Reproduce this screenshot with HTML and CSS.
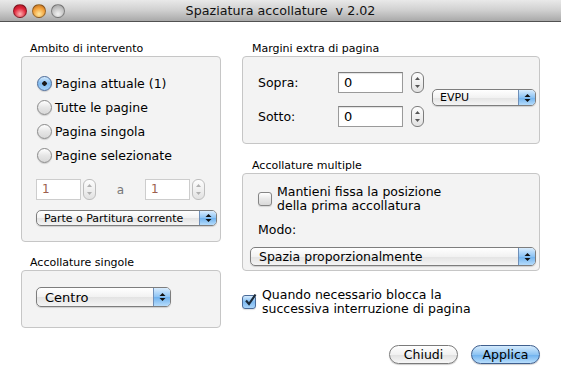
FILE: index.html
```html
<!DOCTYPE html>
<html lang="it">
  <head>
    <meta charset="UTF-8" />
    <title>Spaziatura accollature</title>
    <link rel="stylesheet" href="styles.css">
  </head>

  <body>
    <div class="window">
      <div class="titlebar">
        <div class="lights">
          <span class="light red"></span>
          <span class="light yellow"></span>
          <span class="light off"></span>
        </div>
        <div class="title">Spaziatura accollature&nbsp; v 2.02</div>
        <div></div>
      </div>

      <div class="content">
        <div class="col left">
          <div class="group-label">Ambito di intervento</div>
          <div class="group scope">
            <div class="radio-row"><span class="radio on"></span>Pagina attuale (1)</div>
            <div class="radio-row"><span class="radio"></span>Tutte le pagine</div>
            <div class="radio-row"><span class="radio"></span>Pagina singola</div>
            <div class="radio-row"><span class="radio"></span>Pagine selezionate</div>

            <div class="range">
              <span class="field small disabled">1</span>
              <span class="stepper disabled">
                <svg width="7" height="15" viewBox="0 0 7 15"><polygon points="1,5 3.5,2 6,5" /><polygon points="1,10 6,10 3.5,13" /></svg>
              </span>
              <span class="to">a</span>
              <span class="field small disabled">1</span>
              <span class="stepper disabled">
                <svg width="7" height="15" viewBox="0 0 7 15"><polygon points="1,5 3.5,2 6,5" /><polygon points="1,10 6,10 3.5,13" /></svg>
              </span>
            </div>

            <div class="popup small part">
              <span class="popup-text">Parte o Partitura corrente</span>
              <span class="popup-arrows">
                <svg width="7" height="10" viewBox="0 0 7 10"><polygon points="0.5,4 3.5,1 6.5,4" /><polygon points="0.5,6 6.5,6 3.5,9" /></svg>
              </span>
            </div>
          </div>

          <div class="group-label second">Accollature singole</div>
          <div class="group single">
            <div class="popup centro">
              <span class="popup-text">Centro</span>
              <span class="popup-arrows">
                <svg width="7" height="10" viewBox="0 0 7 10"><polygon points="0.5,4 3.5,1 6.5,4" /><polygon points="0.5,6 6.5,6 3.5,9" /></svg>
              </span>
            </div>
          </div>
        </div>

        <div class="col right">
          <div class="group-label">Margini extra di pagina</div>
          <div class="group margins">
            <div class="margin-grid">
              <span class="margin-label">Sopra:</span>
              <span class="field">0</span>
              <span class="stepper">
                <svg width="7" height="15" viewBox="0 0 7 15"><polygon points="1,5 3.5,2 6,5" /><polygon points="1,10 6,10 3.5,13" /></svg>
              </span>
              <span class="margin-label">Sotto:</span>
              <span class="field">0</span>
              <span class="stepper">
                <svg width="7" height="15" viewBox="0 0 7 15"><polygon points="1,5 3.5,2 6,5" /><polygon points="1,10 6,10 3.5,13" /></svg>
              </span>
            </div>
            <div class="popup small units">
              <span class="popup-text">EVPU</span>
              <span class="popup-arrows">
                <svg width="7" height="10" viewBox="0 0 7 10"><polygon points="0.5,4 3.5,1 6.5,4" /><polygon points="0.5,6 6.5,6 3.5,9" /></svg>
              </span>
            </div>
          </div>

          <div class="group-label second">Accollature multiple</div>
          <div class="group multiple">
            <div class="check-row">
              <span class="checkbox"></span>
              <span>Mantieni fissa la posizione<br>della prima accollatura</span>
            </div>
            <div class="mode-label">Modo:</div>
            <div class="popup mode">
              <span class="popup-text">Spazia proporzionalmente</span>
              <span class="popup-arrows">
                <svg width="7" height="10" viewBox="0 0 7 10"><polygon points="0.5,4 3.5,1 6.5,4" /><polygon points="0.5,6 6.5,6 3.5,9" /></svg>
              </span>
            </div>
          </div>

          <div class="check-row page-break">
            <span class="checkbox on">
              <svg width="14" height="14" viewBox="0 0 14 14"><path d="M3 7.5 L6 11 L12.5 1.5" fill="none" stroke="#1b2a3a" stroke-width="2.2" /></svg>
            </span>
            <span>Quando necessario blocca la<br>successiva interruzione di pagina</span>
          </div>

          <div class="buttons">
            <button class="btn">Chiudi</button>
            <button class="btn default">Applica</button>
          </div>
        </div>
      </div>
    </div>
  </body>
</html>
```

FILE: styles.css
```css
* {
  margin: 0;
  padding: 0;
  box-sizing: border-box;
}

body {
  background-color: #fff;
  font-family: "DejaVu Sans", "Lucida Grande", sans-serif;
  font-size: 12px;
  color: #000;
}

.window {
  width: 561px;
  height: 386px;
  background-color: #fff;
  overflow: hidden;
}

/* barra del titolo */
.titlebar {
  height: 22px;
  display: grid;
  grid-template-columns: 1fr auto 1fr;
  align-items: center;
  background: linear-gradient(#e9e9e9, #cfcfcf 50%, #a9a9a9);
  border-bottom: 1px solid #515151;
}

.lights {
  display: flex;
  gap: 5px;
  padding-left: 13px;
}

.light {
  width: 14px;
  height: 14px;
  border-radius: 50%;
  border: 1px solid rgba(0, 0, 0, 0.35);
}

.light.red {
  background: radial-gradient(circle at 50% 75%, #ffb3b3, #e0263a 55%, #9c0f1c);
}

.light.yellow {
  background: radial-gradient(circle at 50% 75%, #ffe8a0, #f3a13a 55%, #b0631a);
}

.light.off {
  background: radial-gradient(circle at 50% 75%, #f2f2f2, #c4c4c4 55%, #9a9a9a);
}

.title {
  font-size: 12.7px;
  color: #111;
  white-space: nowrap;
}

/* contenuto */
.content {
  display: flex;
  gap: 21px;
  padding: 20px 0 0 21px;
}

.col {
  display: flex;
  flex-direction: column;
}

.col.left {
  width: 200px;
}

.col.right {
  width: 298px;
}

.group-label {
  font-size: 11px;
  line-height: 14px;
  padding-left: 9px;
}

.col.right .group-label {
  padding-left: 10px;
}

.group-label.second {
  margin-top: 14px;
}

.col.right .group-label.second {
  margin-top: 15px;
}

.group {
  background-color: #f3f3f3;
  border: 1px solid #c6c6c6;
  border-radius: 4px;
}

.scope {
  height: 186px;
  padding: 14px 0 0 15px;
}

.radio-row {
  height: 24px;
  display: flex;
  align-items: center;
  gap: 3px;
  font-size: 12.5px;
}

.radio {
  width: 15px;
  height: 15px;
  border-radius: 50%;
  border: 1px solid #8a8a8a;
  background: linear-gradient(#ffffff, #e6e6e6 50%, #d8d8d8);
  box-shadow: 0 1px 1px rgba(0, 0, 0, 0.15);
}

.radio.on {
  border-color: #4a6a98;
  background: radial-gradient(circle, #1a1a1a 0 2px, transparent 2.5px),
    linear-gradient(#d6ecff, #7fbaf0 50%, #a8d4fa);
}

.range {
  display: flex;
  align-items: center;
  margin-top: 12px;
  margin-left: -1px;
}

.field {
  width: 65px;
  height: 21px;
  background-color: #fff;
  border: 1px solid #9a9a9a;
  border-top-color: #7e7e7e;
  box-shadow: inset 0 1px 1px rgba(0, 0, 0, 0.12);
  padding: 2px 0 0 5px;
  font-size: 13px;
}

.field.small {
  width: 45px;
}

.field.disabled {
  border-color: #cdcdcd;
  color: #9c5e4e;
  box-shadow: none;
  font-size: 12px;
}

.stepper {
  width: 13px;
  height: 21px;
  margin-left: 2px;
  border: 1px solid #7c7c7c;
  border-radius: 6px;
  background: linear-gradient(#fdfdfd, #e2e2e2);
  display: flex;
  align-items: center;
  justify-content: center;
}

.stepper svg {
  fill: #555;
}

.stepper.disabled {
  border-color: #bdbdbd;
}

.stepper.disabled svg {
  fill: #b0b0b0;
}

.to {
  width: 49px;
  text-align: center;
  color: #777;
  font-size: 12px;
}

/* menu a comparsa */
.popup {
  height: 20px;
  display: flex;
  align-items: stretch;
  border: 1px solid #7d7d7d;
  border-radius: 5px;
  background: linear-gradient(#ffffff, #f2f2f2 50%, #e3e3e3 51%, #f4f4f4);
  box-shadow: 0 1px 1px rgba(0, 0, 0, 0.15);
  overflow: hidden;
  font-size: 12.5px;
}

.popup-text {
  flex: 1;
  padding-left: 8px;
  display: flex;
  align-items: center;
  white-space: nowrap;
}

.popup-arrows {
  width: 17px;
  border-left: 1px solid #6f8fb8;
  background: linear-gradient(#d9ecfd, #8cc3f4 50%, #6eb1ee 51%, #b6dcfb);
  display: flex;
  align-items: center;
  justify-content: center;
}

.popup-arrows svg {
  fill: #111;
}

.popup.small {
  height: 16px;
  font-size: 11px;
}

.popup.small .popup-text {
  padding-left: 7px;
}

.popup.part {
  width: 181px;
  margin-top: 10px;
  margin-left: -1px;
}

.single {
  height: 58px;
  padding: 16px 0 0 14px;
}

.popup.centro {
  width: 135px;
  font-size: 13px;
}

/* margini */
.margins {
  height: 88px;
  padding: 15px 0 0 15px;
  display: flex;
  align-items: flex-start;
}

.margin-grid {
  display: grid;
  grid-template-columns: 72px 65px 13px;
  column-gap: 8px;
  row-gap: 13px;
  align-items: center;
}

.margin-grid .stepper {
  margin-left: 0;
}

.margin-label {
  font-size: 12.5px;
}

.popup.units {
  width: 104px;
  height: 17px;
  margin-top: 17px;
  margin-left: 8px;
}

.multiple {
  height: 98px;
  padding: 11px 0 0 15px;
}

.check-row {
  display: flex;
  align-items: center;
  gap: 5px;
  font-size: 12.5px;
  line-height: 13.5px;
}

.checkbox {
  width: 14px;
  height: 14px;
  border: 1px solid #858585;
  border-radius: 3px;
  background: linear-gradient(#ffffff, #e8e8e8 50%, #d9d9d9);
  box-shadow: 0 1px 1px rgba(0, 0, 0, 0.12);
  flex: none;
}

.checkbox.on {
  border-color: #4a6a98;
  background: linear-gradient(#d6ecff, #7fbaf0 50%, #a8d4fa);
  position: relative;
}

.checkbox.on svg {
  position: absolute;
  left: 0;
  top: -3px;
}

.mode-label {
  font-size: 12.5px;
  line-height: 14px;
  margin-top: 11px;
}

.popup.mode {
  width: 286px;
  height: 19px;
  margin-top: 10px;
  margin-left: -8px;
}

.page-break {
  margin-top: 17px;
  gap: 6px;
}

.buttons {
  display: flex;
  justify-content: flex-end;
  gap: 13px;
  margin-top: 30px;
}

.btn {
  width: 69px;
  height: 19px;
  border-radius: 10px;
  border: 1px solid #7a7a7a;
  background: linear-gradient(#ffffff, #f1f1f1 50%, #e0e0e0 51%, #f7f7f7);
  box-shadow: 0 1px 1px rgba(0, 0, 0, 0.2);
  font-family: "DejaVu Sans", "Lucida Grande", sans-serif;
  font-size: 12.5px;
  color: #000;
}

.btn.default {
  border-color: #3f5f8e;
  background: linear-gradient(#d5ebfd, #8ec4f3 50%, #6cb0ee 51%, #b9defc);
}
```
